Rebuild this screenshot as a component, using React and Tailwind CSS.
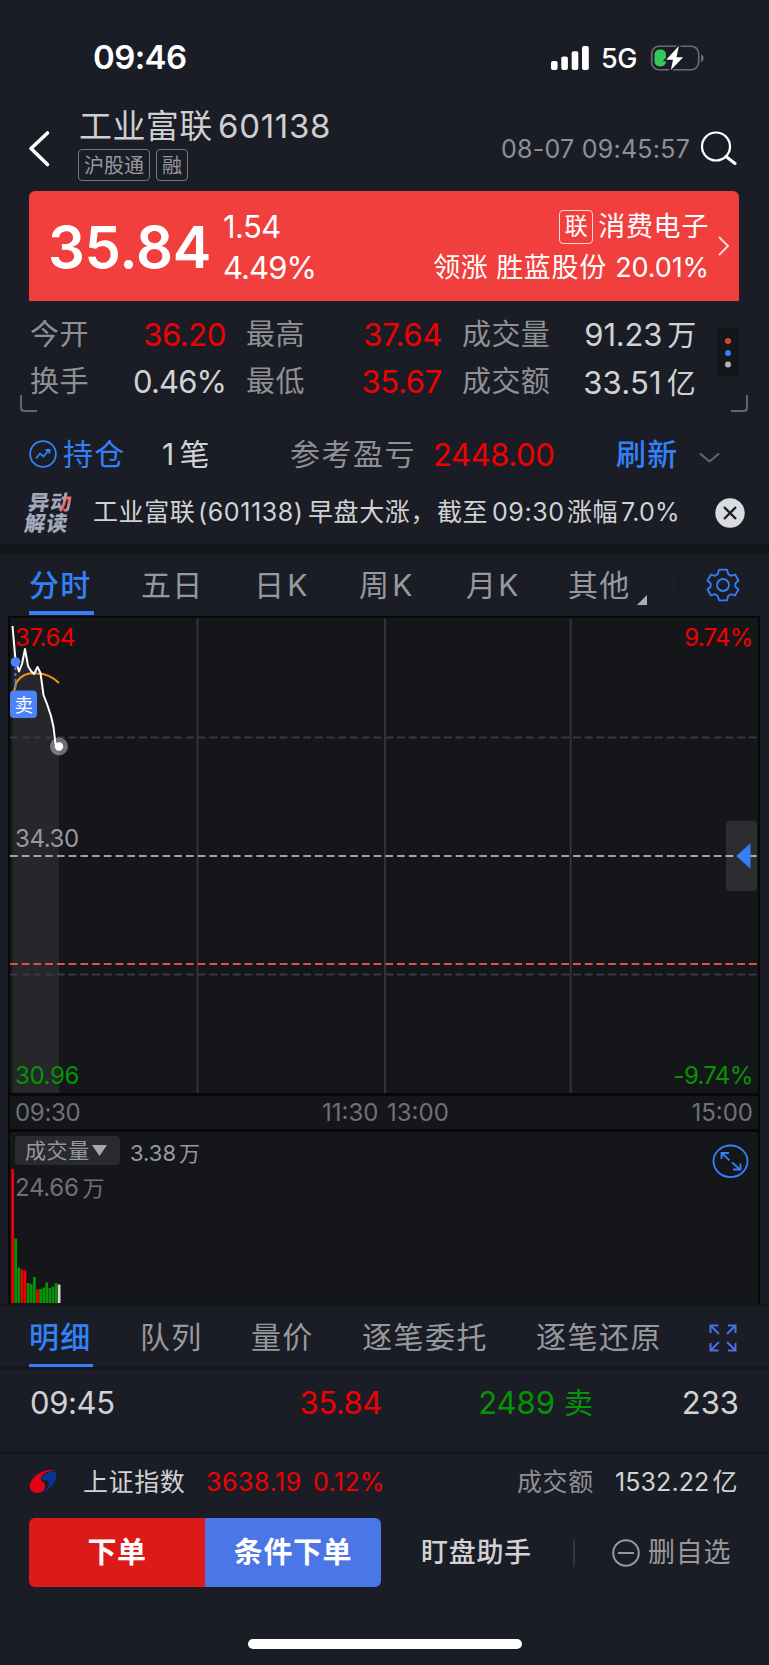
import React from "react";

const VOLUMES = [
  ["r", 1169], ["g", 1238.5], ["g", 1267.5], ["r", 1269.5], ["r", 1270.5], ["g", 1283],
  ["g", 1284], ["g", 1277], ["r", 1289.5], ["g", 1289], ["g", 1287.5], ["g", 1282.5],
  ["g", 1288], ["g", 1286.5], ["g", 1283], ["w", 1284.5],
];
const VOLUME_COLORS = { r: "#f00000", g: "#069406", w: "#d4d4d6" };

function StatusBar() {
  return (
    <header className="flex h-[115px] items-center pl-[93px] font-semibold text-white">
      <span className="w-[389px] text-[33px] leading-none tracking-[-0.6px]">09:46</span>
      <svg className="w-[39px] h-[24px] ml-[69px]" viewBox="0 0 39 24" fill="#fff">
        <rect x="0" y="15" width="6.6" height="9" rx="2" />
        <rect x="10.3" y="10.5" width="6.6" height="13.5" rx="2" />
        <rect x="20.7" y="5.3" width="6.6" height="18.7" rx="2" />
        <rect x="31" y="0" width="6.8" height="24" rx="2" />
      </svg>
      <span className="ml-[11px] w-[48px] pt-[2px] text-[27px] font-medium leading-none tracking-[-0.5px]">5G</span>
      <svg className="w-[56px] h-[28px] ml-[1px]" viewBox="650 43 56 28" fill="none">
        <rect x="651.7" y="45.2" width="47" height="23.6" rx="7.5" stroke="#6d6e73" strokeWidth="1.6" />
        <path d="M701 53.5c3.5 1 3.500 6.500 0 7.500z" fill="#6d6e73" />
        <rect x="654.500" y="48.500" width="11.500" height="17" rx="5" fill="#34c759" />
        <path d="M679.500 43L664.500 59.500H672L669.500 71.500L685 55.500H677.500L680 43.500Z" fill="#fff" stroke="#1b1d26" strokeWidth="1.600" />
      </svg>
    </header>
  );
}

function TitleBar() {
  return (
    <div className="flex h-[76px] pl-[28px]">
      <svg className="mt-[14px] h-[40px] w-[24px]" viewBox="0 0 24 40" fill="none" stroke="#fff" strokeWidth="3.600" strokeLinecap="round" strokeLinejoin="round">
        <path d="M19.500 4L3 19.500L19.500 35.500" />
      </svg>
      <div className="ml-[26px] w-[423px]">
        <div className="flex h-[22px] items-center pl-px text-[33px] leading-none text-[#cfcfcf]">
          <span className="w-[139px] tracking-[0.4px]">工业富联</span>
          <span className="tracking-[0.7px]">601138</span>
        </div>
        <div className="mt-[12px] flex gap-[6px] text-[20px] leading-none text-[#97989b]">
          <span className="flex h-[32px] w-[72px] items-center justify-center rounded-[4px] border border-[#77787c] pt-[2px]">沪股通</span>
          <span className="flex h-[32px] w-[32px] items-center justify-center rounded-[4px] border border-[#77787c] pt-[2px]">融</span>
        </div>
      </div>
      <span className="mt-[22px] w-[198px] whitespace-nowrap text-[25px] leading-none tracking-[0.250px] text-[#8f9093]">08-07 09:45:57</span>
      <svg className="mt-[14px] h-[38px] w-[38px]" viewBox="699 129 38 38" fill="none" stroke="#fff" strokeWidth="2.200" strokeLinecap="round">
        <circle cx="716" cy="146.500" r="14" />
        <path d="M726 156.500L735 163.500" strokeWidth="3" />
      </svg>
    </div>
  );
}

function PriceCard() {
  return (
    <section className="ml-[29px] flex h-[110px] w-[710px] rounded-t-[6px] bg-[#f03f3c] text-white">
      <span className="w-[194px] pl-[19px] text-[58px] font-semibold leading-[112px] tracking-[-0.300px]">35.84</span>
      <div className="w-[150px] pt-[15px] text-[31px] leading-[41px]">
        <div className="tracking-[-0.6px]">1.54</div>
        <div className="tracking-[-0.9px]">4.49%</div>
      </div>
      <div className="flex w-[336px] flex-col items-end pt-[15px] text-[27px] leading-[41px] tracking-[0.7px]">
        <div className="flex items-center">
          <span className="mr-[5px] flex h-[34px] w-[34px] items-center justify-center rounded-[4px] border border-white/80 text-[23px] tracking-normal">联</span>
          <span>消费电子</span>
        </div>
        <div className="flex whitespace-nowrap">
          <span className="w-[63px]">领涨</span>
          <span className="w-[119px]">胜蓝股份</span>
          <span className="tracking-[-0.1px]">20.01%</span>
        </div>
      </div>
      <svg className="ml-[8px] mt-[44px] h-[22px] w-[14px]" viewBox="0 0 14 22" fill="none" stroke="#fff" strokeOpacity="0.8" strokeWidth="2">
        <path d="M2 2L11 11L2 20" />
      </svg>
    </section>
  );
}

function Stats() {
  return (
    <section className="flex h-[111px] pl-[30px] pt-[10px] text-[31px] leading-[47px] tracking-[-0.2px] text-[#d2d2d3]">
      <div className="w-[60px] text-[29px] tracking-[0.4px] text-[#8f9093]">
        <div>今开</div><div>换手</div>
      </div>
      <div className="w-[136px] text-right">
        <div className="tracking-[-0.4px] text-[#f00000]">36.20</div><div className="tracking-[-0.9px]">0.46%</div>
      </div>
      <div className="ml-[20px] w-[60px] text-[29px] tracking-[0.4px] text-[#8f9093]">
        <div>最高</div><div>最低</div>
      </div>
      <div className="w-[136px] text-right tracking-[-0.300px] text-[#f00000]">
        <div>37.64</div><div>35.67</div>
      </div>
      <div className="ml-[20px] w-[100px] text-[29px] tracking-[0.4px] text-[#8f9093]">
        <div>成交量</div><div>成交额</div>
      </div>
      <div className="w-[134px] text-right">
        <div>91.23<span className="ml-[5px] text-[29px]">万</span></div>
        <div className="tracking-[0.200px]">33.51<span className="ml-[5px] text-[29px]">亿</span></div>
      </div>
      <svg className="ml-[20px] mt-[16px] h-[50px] w-[24px]" viewBox="0 0 24 50">
        <rect x="1" y="0.500" width="22" height="49" rx="4" fill="#15161a" />
        <circle cx="12" cy="14" r="3" fill="#d9452f" />
        <circle cx="12" cy="26" r="3" fill="#3281f6" />
        <circle cx="12" cy="37.500" r="3" fill="#b4b4b6" />
      </svg>
    </section>
  );
}

function Corners() {
  return (
    <div className="-mt-[17px] flex h-[17px] justify-between pl-[20px] pr-[21px]">
      <div className="h-[17px] w-[17px] rounded-bl-[4px] border-b-2 border-l-2 border-[#66676b]" />
      <div className="h-[17px] w-[17px] rounded-br-[4px] border-b-2 border-r-2 border-[#66676b]" />
    </div>
  );
}

function Position() {
  return (
    <section className="flex h-[84px] items-center pl-[29px] text-[30px] leading-none tracking-[1.300px] text-[#d2d2d3]">
      <svg className="h-[28px] w-[28px]" viewBox="0 0 28 28" fill="none" stroke="#3281f6" strokeWidth="1.800">
        <circle cx="14" cy="14" r="12.900" />
        <path d="M7 18.500L11 13.500L14.500 16.500L20 10M16.500 10H20.500V13.500" />
      </svg>
      <span className="ml-[6px] w-[99px] text-[#3281f6]">持仓</span>
      <span className="w-[128px]">1<span className="ml-[4px]">笔</span></span>
      <span className="w-[143px] tracking-[1.500px] text-[#8f9093]">参考盈亏</span>
      <span className="w-[183px] text-[31px] tracking-[-0.400px] text-[#f00000]">2448.00</span>
      <span className="w-[83px] font-medium text-[#3281f6]">刷新</span>
      <svg className="mt-[8px] h-[12px] w-[21px]" viewBox="0 0 21 12" fill="none" stroke="#68696e" strokeWidth="2">
        <path d="M1 1.500L10.500 9.500L20 1.500" />
      </svg>
    </section>
  );
}

function News() {
  return (
    <section className="flex h-[48px] items-center pb-[15px] pl-[26px]">
      <div className="w-[67px] -skew-x-[8deg] text-[21px] font-black leading-[21px] tracking-[1px] text-[#a3a9bb]">
        <div className="pl-[1px]">异<span className="bg-[linear-gradient(105deg,#a3a9bb_58%,#f26a5c_58%,#f26a5c_78%,#a3a9bb_78%)] bg-clip-text text-transparent">动</span></div>
        <div>解读</div>
      </div>
      <p className="flex w-[622px] whitespace-nowrap text-[25px] leading-none tracking-[0.600px] text-[#d2d2d3]">
        <span className="w-[105px]">工业富联</span>
        <span className="w-[110px]">(601138)</span>
        <span className="w-[129px]">早盘大涨，</span>
        <span className="w-[55px]">截至</span>
        <span className="w-[75px]">09:30</span>
        <span className="w-[54px]">涨幅</span>
        <span className="tracking-[0.200px]">7.0%</span>
      </p>
      <svg className="h-[30px] w-[30px]" viewBox="0 0 30 30" fill="none">
        <circle cx="15" cy="15" r="14.700" fill="#dadbdf" />
        <path d="M9 9L21 21M21 9L9 21" stroke="#1b1d26" strokeWidth="2.400" />
      </svg>
    </section>
  );
}

function ChartTabs() {
  return (
    <nav className="flex h-[62px] pl-[29px] text-[30px] leading-[63px] tracking-[1.300px] text-[#98999c]">
      <div className="h-[61px] w-[65px] border-b-[4px] border-[#3281f6] font-medium text-[#3281f6]">分时</div>
      <span className="ml-[47px] w-[113px]">五日</span>
      <span className="w-[105px]">日<span className="ml-[2px]">K</span></span>
      <span className="w-[107px]">周<span className="ml-[2px]">K</span></span>
      <span className="w-[102px]">月<span className="ml-[1px]">K</span></span>
      <span className="w-[69px]">其他</span>
      <svg className="mt-[41px] h-[10px] w-[10px]" viewBox="0 0 10 10"><path d="M10 0V10H0Z" fill="#b0b0b2" /></svg>
      <span className="ml-[31px] mt-[17px] h-[27px] w-px bg-[#15161a]" />
      <svg className="ml-[27px] mt-[14px] h-[34px] w-[34px]" viewBox="-17 -17 34 34" fill="none" stroke="#3281f6" strokeWidth="1.800" strokeLinejoin="round">
        <circle r="6" />
        <path d="M-4 -15.300H4L5.300 -10.800L8 -9.200L12 -10.500L15.500 -4.500L12.300 -1.500V1.500L15.500 4.500L12 10.500L8 9.200L5.300 10.800L4 15.300H-4L-5.300 10.800L-8 9.200L-12 10.500L-15.500 4.500L-12.300 1.500V-1.500L-15.500 -4.500L-12 -10.500L-8 -9.200L-5.300 -10.800Z" />
      </svg>
    </nav>
  );
}

function PriceChart() {
  return (
    <svg className="block h-[480px] w-[769px] text-[24px] tracking-[-0.400px]" viewBox="0 616 769 480" fill="none">
      <rect x="8" y="616" width="752" height="480" fill="#08080b" />
      <rect x="10" y="618" width="748" height="475" fill="#15161a" />
      <path d="M12.500 626L15.500 660L19 672L25 648L29 668L34 674L37 667L41 674L44 696L50 712L53 724L56 745L59 747V1093H12.500Z" fill="#26272b" />
      <path d="M197.500 618V1093M385 618V1093M570.700 618V1093" stroke="#32333e" strokeWidth="2" />
      <path d="M10 737.500H758M10 974.500H758" stroke="#373843" strokeWidth="2" strokeDasharray="7.700 4.030" />
      <path d="M10 856H758" stroke="#a2a2a5" strokeWidth="2" strokeDasharray="7.700 4.030" />
      <path d="M10 964H758" stroke="#e2513f" strokeWidth="2" strokeDasharray="7.700 4.030" />
      <path d="M14 692L16 683C20 676 28 672 35 673.500C44 673 53 677 59 683" stroke="#f0921f" strokeWidth="2" />
      <path d="M12.500 626L15.500 660L19 671.500L22 664L25 649L28 666L31 671L34 674L37.500 667L40.500 673L43.500 695L47 704L51 716L53.500 727L55.500 744L59 747" stroke="#fff" strokeWidth="2" strokeLinejoin="round" />
      <path d="M15.500 667V690" stroke="#4d82fa" strokeWidth="1.800" strokeDasharray="3 3" />
      <circle cx="15.500" cy="662" r="4.800" fill="#4d82fa" />
      <rect x="10" y="690.500" width="27" height="27.500" rx="4" fill="#4d82fa" />
      <text x="23.500" y="711.800" fontSize="18.500" textAnchor="middle" fill="#fff">卖</text>
      <circle cx="59" cy="746.500" r="9" fill="#fff" fillOpacity="0.380" />
      <circle cx="59" cy="746.500" r="4.200" fill="#fff" />
      <text x="15" y="646" fill="#f00000">37.64</text>
      <text x="752.500" y="646" textAnchor="end" fill="#f00000" className="tracking-[-0.750px]">9.74%</text>
      <text x="15" y="846.500" fill="#98999c">34.30</text>
      <text x="15" y="1083.500" fill="#069406">30.96</text>
      <text x="752.500" y="1083.500" textAnchor="end" fill="#069406" className="tracking-[-0.700px]">-9.74%</text>
      <rect x="726" y="820.500" width="31" height="70.500" rx="4" fill="#fff" fillOpacity="0.100" />
      <path d="M750.500 843V869L736.500 856Z" fill="#3281f6" />
    </svg>
  );
}

function TimeAxis() {
  return (
    <div className="ml-[8px] flex h-[36px] w-[752px] border-x-2 border-b-[3px] border-[#08080b] bg-[#15161a] pl-[5px] pr-[5px] text-[24px] leading-[34px] text-[#707174]">
      <span className="w-[307px] tracking-[-0.300px]">09:30</span>
      <span className="w-[65px]">11:30</span>
      <span className="flex-1">13:00</span>
      <span>15:00</span>
    </div>
  );
}

function VolumePanel() {
  return (
    <section className="ml-[8px] h-[172px] w-[752px] border-x-2 border-[#08080b] bg-[#15161a]">
      <div className="flex h-[36px] pl-[5px] pt-[4px] text-[21px] leading-[30px] text-[#98999c]">
        <div className="flex h-[29px] w-[105px] items-center rounded-[4px] bg-[#282a2e] pl-[10px]">
          <span className="tracking-[0.600px]">成交量</span>
          <svg className="ml-[2px] h-[11px] w-[15px]" viewBox="0 0 15 11"><path d="M0 0H15L7.500 11Z" fill="#a9a9ab" /></svg>
        </div>
        <span className="ml-[10px] pt-[2px] text-[22px]">3.38<span className="ml-[3px] text-[21px]">万</span></span>
        <svg className="ml-auto mr-[9px] mt-[8px] h-[34px] w-[37px]" viewBox="712 1144 37 34" fill="none" stroke="#3281f6" strokeWidth="1.800">
          <ellipse cx="730.500" cy="1161.300" rx="17" ry="15.800" />
          <path d="M729.500 1160.300L722 1153.500M721.500 1159V1153H729M732 1162.300L740 1169.500M740.500 1163.500V1169.500H733" />
        </svg>
      </div>
      <div className="flex h-[135px]">
        <svg className="block h-[135px] w-[60px] shrink-0" viewBox="10 1168 60 135">
          {VOLUMES.map(([kind, top], i) => (
            <rect key={i} x={11.300 + i * 3.100} y={top} width="2.700" height={1303 - top} fill={VOLUME_COLORS[kind]} />
          ))}
        </svg>
        <span className="-ml-[55px] mt-[8px] text-[24px] leading-[24px] tracking-[-0.300px] text-[#707174]">24.66<span className="ml-[4px] text-[22px]">万</span></span>
      </div>
    </section>
  );
}

function DetailTabs() {
  return (
    <nav className="flex h-[65px] border-b-2 border-t-2 border-[#15161a] pl-[29px] text-[30px] leading-[62px] tracking-[1.300px] text-[#98999c]">
      <div className="h-[61px] w-[64px] border-b-[3px] border-[#3281f6] font-medium text-[#3281f6]">明细</div>
      <span className="ml-[47px] w-[111px]">队列</span>
      <span className="w-[111px]">量价</span>
      <span className="w-[174px] tracking-[1.500px]">逐笔委托</span>
      <span className="w-[173px] tracking-[1.500px]">逐笔还原</span>
      <svg className="mt-[18px] h-[28px] w-[28px]" viewBox="0 0 28 28" fill="none" stroke="#4a6fe8" strokeWidth="2">
        <path d="M1.500 9V1.500H9.500M1.500 1.500L10 10M19 1.500H26.500V9M26.500 1.500L18 10M1.500 19V26.500H9.500M1.500 26.500L10 18M19 26.500H26.500V19M26.500 26.500L18 18" />
      </svg>
    </nav>
  );
}

function TradeRow() {
  return (
    <section className="flex h-[85px] items-start border-b-2 border-[#15161a] text-[31px] leading-[67px] text-[#d2d2d3]">
      <div className="flex h-[67px] w-full border-b border-[#17181e] pl-[30px]">
        <span className="w-[121px] tracking-[-0.400px]">09:45</span>
        <span className="w-[231px] text-right tracking-[-0.400px] text-[#f00000]">35.84</span>
        <span className="w-[211px] text-right text-[#069406]">2489<span className="ml-[9px] text-[29px]">卖</span></span>
        <span className="w-[146px] text-right">233</span>
      </div>
    </section>
  );
}

function IndexRow() {
  return (
    <section className="flex h-[64px] items-center pl-[29px] pb-[8px] text-[25px] leading-none tracking-[0.600px] text-[#d2d2d3]">
      <svg className="-mt-[3px] h-[26px] w-[28px]" viewBox="0 0 28 26">
        <path d="M26.500 4C30 11 22 22 11.500 25C19 21 21 17 19.500 13.500C18.500 11.500 14 12.500 12 11.500C13 7 22 2 26.500 4Z" fill="#0a3494" />
        <path d="M26 3.500C20 -1 4 6 1 15.500C-1 22 5 26 10.500 24.700C15 23.500 17 20 16 16.500C15 13.500 11 13.500 12 10C13 6 20 1.500 26 3.500Z" fill="#e60013" />
      </svg>
      <span className="ml-[26px] w-[123px]">上证指数</span>
      <span className="w-[107px] tracking-[0.550px] text-[#f00000]">3638.19</span>
      <span className="w-[204px] tracking-[0.350px] text-[#f00000]">0.12%</span>
      <span className="w-[98px] text-[#8f9093]">成交额</span>
      <span className="whitespace-nowrap tracking-[0.100px]">1532.22<span className="ml-[3px]">亿</span></span>
    </section>
  );
}

function ActionBar() {
  return (
    <section className="flex h-[69px] items-center pl-[29px]">
      <button className="h-[69px] w-[176px] rounded-l-[6px] bg-[#dc1a1a] text-[29px] font-bold leading-none tracking-[0.400px] text-white">下单</button>
      <button className="h-[69px] w-[176px] rounded-r-[6px] bg-[#4a76e8] text-[29px] font-bold leading-none tracking-[0.600px] text-white">条件下单</button>
      <span className="ml-[40px] w-[152px] text-[27px] font-medium leading-none tracking-[0.700px] text-[#d2d2d3]">盯盘助手</span>
      <span className="h-[28px] w-[2px] bg-[#33343f]" />
      <svg className="ml-[37px] h-[28px] w-[28px]" viewBox="0 0 28 28" fill="none" stroke="#98999c" strokeWidth="2">
        <circle cx="14" cy="14" r="12.800" />
        <path d="M6 14H22" />
      </svg>
      <span className="ml-[8px] text-[27px] leading-none tracking-[0.700px] text-[#98999c]">删自选</span>
    </section>
  );
}

export default function App() {
  return (
    <main className="h-[1665px] w-[769px] overflow-hidden bg-[#1b1d26] font-['Inter','Noto_Sans_CJK_SC',sans-serif]" lang="zh-CN">
      <StatusBar />
      <TitleBar />
      <PriceCard />
      <Stats />
      <Corners />
      <Position />
      <News />
      <div className="h-[10px] bg-[#15161a]" />
      <ChartTabs />
      <PriceChart />
      <TimeAxis />
      <VolumePanel />
      <DetailTabs />
      <TradeRow />
      <IndexRow />
      <ActionBar />
      <div className="mx-auto mt-[52px] h-[10px] w-[274px] rounded-full bg-white" />
    </main>
  );
}
